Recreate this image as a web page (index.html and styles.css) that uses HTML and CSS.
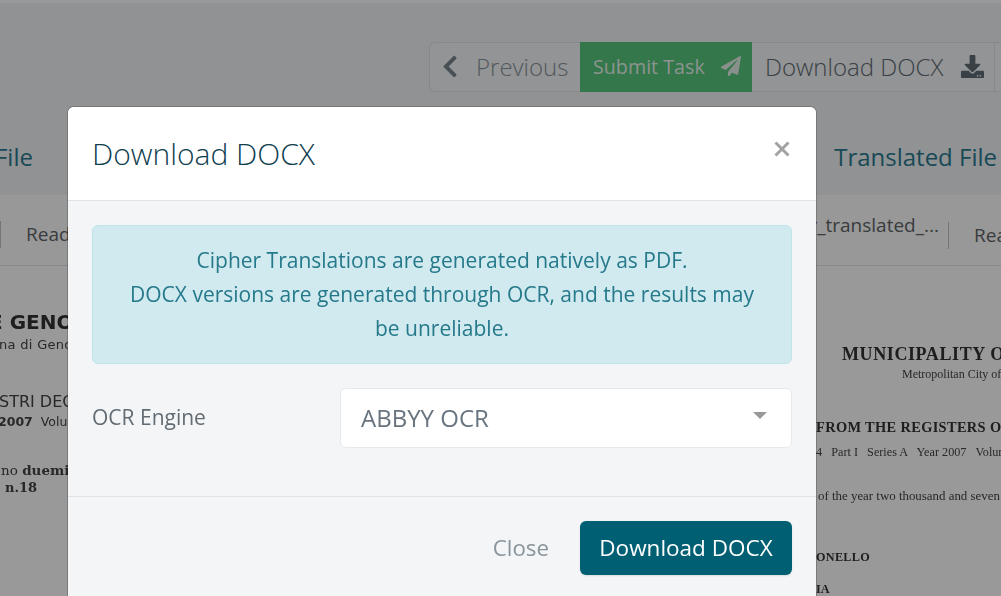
FILE: index.html
```html
<!DOCTYPE html>
<html lang="en">
<head>
<meta charset="utf-8">
<title>Download DOCX</title>
<link rel="stylesheet" href="styles.css">
</head>
<body>
<div class="page">
  <div class="topstrip"></div>
  <div class="upper">
    <div class="toolbar">
      <div class="tool tool-prev">
        <svg class="ico ico-chev" viewBox="0 0 320 512"><path d="M34.52 239.03L228.87 44.69c9.37-9.37 24.57-9.37 33.94 0l22.67 22.67c9.36 9.36 9.37 24.52.04 33.9L131.49 256l154.02 154.75c9.34 9.38 9.32 24.54-.04 33.9l-22.67 22.67c-9.37 9.37-24.57 9.37-33.94 0L34.52 272.97c-9.37-9.37-9.37-24.57 0-33.94z"/></svg>
        <span>Previous</span>
      </div>
      <div class="tool tool-submit">
        <span>Submit Task</span>
        <svg class="ico ico-plane" viewBox="0 0 512 512"><path d="M476 3.2L12.5 270.6c-18.1 10.4-15.8 35.6 2.2 43.2L121 358.4l287.3-253.2c5.5-4.9 13.3 2.6 8.6 8.3L176 407v80.5c0 23.6 28.5 32.9 42.5 15.8L282 426l124.6 52.2c14.2 6 30.4-2.9 33-18.2l72-432C515 7.8 493.3-6.8 476 3.2z"/></svg>
      </div>
      <div class="tool tool-docx">
        <span>Download DOCX</span>
        <svg class="ico ico-dl" viewBox="0 0 512 512"><path d="M216 0h80c13.3 0 24 10.7 24 24v168h87.7c17.8 0 26.7 21.5 14.1 34.1L269.7 378.3c-7.5 7.5-19.8 7.5-27.3 0L90.1 226.1c-12.6-12.6-3.7-34.1 14.1-34.1H192V24c0-13.3 10.7-24 24-24zm296 376v112c0 13.3-10.7 24-24 24H24c-13.3 0-24-10.7-24-24V376c0-13.3 10.7-24 24-24h146.7l49 49c20.1 20.1 52.5 20.1 72.6 0l49-49H488c13.3 0 24 10.7 24 24zm-124 88c0-11-9-20-20-20s-20 9-20 20 9 20 20 20 20-9 20-20zm64 0c0-11-9-20-20-20s-20 9-20 20 9 20 20 20 20-9 20-20z"/></svg>
      </div>
      <div class="tool tool-rest"></div>
    </div>
    <div class="titles">
      <div class="pane-title title-left">Original File</div>
      <div class="pane-title title-right">Translated File</div>
    </div>
  </div>
  <div class="filebar">
    <div class="file-left"><span class="read read-left">Read</span></div>
    <div class="file-right"><span class="fname">cipher_translated_...</span><span class="read read-right">Read</span></div>
  </div>
  <div class="docs">
    <div class="doc doc-left">
      <div class="dl dl1">E GENOVA</div>
      <div class="dl dl2">na di Genova</div>
      <div class="dl dl3">STRI DECRETI</div>
      <div class="dl dl4"><b>2007</b>&nbsp; Volume</div>
      <div class="dl dl5">no <b>duemila</b></div>
      <div class="dl dl6"><b>n.18</b></div>
    </div>
    <div class="doc doc-right">
      <div class="dr dr1">MUNICIPALITY OF GENOA</div>
      <div class="dr dr2">Metropolitan City of Genoa</div>
      <div class="dr dr3">FROM THE REGISTERS OF DECREES</div>
      <div class="dr dr4">4 &nbsp;&nbsp;Part I &nbsp;&nbsp;Series A &nbsp;&nbsp;Year 2007 &nbsp;&nbsp;Volume</div>
      <div class="dr dr5">of the year two thousand and seven</div>
      <div class="dr dr6">ONELLO</div>
      <div class="dr dr7">IA</div>
    </div>
  </div>
</div>
<div class="backdrop"></div>
<div class="modal">
  <div class="modal-head">
    <h2 class="modal-title">Download DOCX</h2>
    <svg class="close-x" viewBox="0 0 16 16"><path d="M1.5 1.5L14.5 14.5M14.5 1.5L1.5 14.5"/></svg>
  </div>
  <div class="modal-body">
    <div class="alert">Cipher Translations are generated natively as PDF.<br>DOCX versions are generated through OCR, and the results may be unreliable.</div>
    <div class="field">
      <label class="field-label">OCR Engine</label>
      <div class="select"><span class="select-value">ABBYY OCR</span><i class="caret"></i></div>
    </div>
  </div>
  <div class="modal-foot">
    <span class="btn-close">Close</span>
    <span class="btn-primary">Download DOCX</span>
  </div>
</div>
</body>
</html>
```
FILE: styles.css
```css
* { box-sizing: border-box; }
html, body { margin: 0; height: 100%; overflow: hidden; }
body { font-family: "Open Sans", sans-serif; background: #fff; }
.page { width: 1001px; height: 596px; overflow: hidden; display: flex; flex-direction: column; }
.topstrip { height: 3px; background: #fff; flex: none; }
.upper { height: 192px; flex: none; background: #f1f4f6; display: flex; flex-direction: column; }
.toolbar { display: flex; height: 50px; margin: 39px 0 0 429px; flex: none; width: 620px; }
.tool { display: flex; align-items: center; height: 50px; border: 1px solid #dfe3e6; background: #f5f7f8; font-size: 24px; font-weight: 300; color: #5f6b75; white-space: nowrap; padding-bottom: 2px; }
.tool-prev { width: 151px; border-radius: 6px 0 0 6px; padding-left: 12px; color: #8a939a; border-right: 0; }
.tool-prev span { margin-left: 18px; }
.tool-submit { width: 172px; background: #55c67c; border: 0; padding-left: 13px; color: #e9f5ee; font-size: 19.7px; font-weight: 400; }
.tool-docx { width: 243px; padding-left: 13px; border-left: 0; border-right: 1px solid #dfe3e6; }
.tool-rest { width: 54px; border-left: 0; }
.ico { flex: none; display: block; }
.ico-chev { width: 16px; height: 25px; fill: #7b858d; }
.ico-plane { width: 20px; height: 20px; margin-left: 16px; fill: #e4f1e9; }
.ico-dl { width: 23px; height: 23px; margin-left: 18px; fill: #5f6b75; }
.titles { display: flex; justify-content: space-between; margin-top: 48px; padding-right: 4px; font-size: 24px; color: #2a7a90; line-height: 34px; }
.title-left { margin-left: -99px; white-space: nowrap; }
.title-right { white-space: nowrap; }
.filebar { height: 71px; flex: none; display: flex; background: #fdfefe; border-bottom: 1px solid #e3e5e7; font-size: 19px; color: #5f6468; }
.file-left { width: 400px; flex: none; display: flex; align-items: center; padding-top: 10px; }
.read-left { border-left: 1px solid #bfc2c5; padding-left: 25px; line-height: 27px; margin-top: -1px; }
.file-right { flex: 1; display: flex; justify-content: flex-end; align-items: flex-start; overflow: hidden; padding-top: 17px; }
.fname { white-space: nowrap; line-height: 27px; margin-right: 9px; }
.read-right { border-left: 1px solid #bfc2c5; padding-left: 25px; line-height: 27px; margin-top: 10px; width: 53px; overflow: hidden; flex: none; }
.docs { flex: 1; display: flex; background: #fff; color: #333; min-height: 0; filter: blur(.25px); }
.doc { overflow: hidden; white-space: nowrap; }
.doc-left { width: 400px; font-family: "DejaVu Sans", sans-serif; }
.doc-right { flex: 1; font-family: "Liberation Serif", serif; padding-left: 416px; }
.dl1 { font-size: 20px; font-weight: 700; margin: 44px 0 0 -11px; line-height: 24px; color: #333; }
.dl2 { font-size: 13px; line-height: 17px; margin: 2px 0 0 -1px; color: #444; letter-spacing: .3px; }
.dl3 { font-size: 16px; margin: 37px 0 0 -1px; line-height: 24px; color: #444; }
.dl4 { font-size: 12.5px; line-height: 18px; margin: -1px 0 0 -2px; color: #444; }
.dl5 { font-size: 13.5px; line-height: 17px; margin: 31px 0 0 1px; font-family: "DejaVu Serif", serif; color: #444; }
.dl6 { font-size: 13px; line-height: 17px; margin: 0 0 0 5px; font-family: "DejaVu Serif", serif; color: #444; }
.dr1 { font-size: 18px; font-weight: 700; line-height: 20px; margin: 78px 0 0 26px; letter-spacing: .6px; color: #333; }
.dr2 { font-size: 12px; line-height: 13px; margin: 4px 0 0 86px; color: #444; }
.dr3 { font-size: 14.4px; font-weight: 700; line-height: 17px; margin: 38px 0 0 0; letter-spacing: .35px; color: #333; }
.dr4 { font-size: 12.2px; line-height: 14px; margin: 9px 0 0 0; color: #444; }
.dr5 { font-size: 12.9px; line-height: 14px; margin: 30px 0 0 2px; color: #444; }
.dr6 { font-size: 12.2px; font-weight: 700; line-height: 14px; margin: 47px 0 0 0; letter-spacing: .3px; color: #333; }
.dr7 { font-size: 12.2px; font-weight: 700; line-height: 14px; margin: 18px 0 0 0; color: #333; }
.backdrop { position: fixed; inset: 0; background: rgba(0, 0, 0, .4); }
.modal { position: fixed; left: 68px; top: 107px; width: 748px; height: 510px; background: #f3f5f7; border-radius: 6px; box-shadow: 0 0 0 1px rgba(0, 0, 0, .2); display: flex; flex-direction: column; overflow: hidden; }
.modal-head { height: 94px; flex: none; background: #fff; border-bottom: 1px solid #dfe3e6; display: flex; align-items: flex-start; justify-content: space-between; padding: 0 26px 0 24px; }
.modal-title { margin: 26px 0 0; font-size: 30px; line-height: 41px; font-weight: 300; color: #0f4050; }
.close-x { width: 16px; height: 16px; margin-top: 34px; fill: none; stroke: #a3a3a3; stroke-width: 3; }
.modal-body { height: 296px; flex: none; padding: 24px 24px 0; border-bottom: 1px solid #dfe3e6; }
.alert { background: #d0eaef; border: 1px solid #bfe3e9; border-radius: 6px; color: #25798b; font-size: 21px; line-height: 34px; text-align: center; padding: 17px 24px; height: 139px; }
.field { display: flex; align-items: center; margin-top: 24px; }
.field-label { width: 248px; flex: none; font-size: 21px; color: #636c72; line-height: 27px; margin-top: -2px; }
.select { flex: 1; height: 60px; background: #fff; border: 1px solid #e6e9ec; border-radius: 6px; display: flex; align-items: center; justify-content: space-between; padding: 0 24px 0 20px; font-size: 24px; color: #68747f; }
.select-value { margin-top: -2px; }
.caret { width: 0; height: 0; border-left: 7px solid transparent; border-right: 7px solid transparent; border-top: 7px solid #999; margin-top: -5px; }
.modal-foot { display: flex; justify-content: flex-end; align-items: center; padding: 24px 24px 0; gap: 31px; }
.btn-close { font-size: 22.3px; color: #8a949b; line-height: 30px; }
.btn-primary { height: 54px; width: 212px; background: #005f73; color: #fff; border-radius: 6px; font-size: 22.5px; padding-bottom: 2px; display: flex; align-items: center; justify-content: center; box-shadow: 0 1px 2px rgba(0, 0, 0, .1); }
```
